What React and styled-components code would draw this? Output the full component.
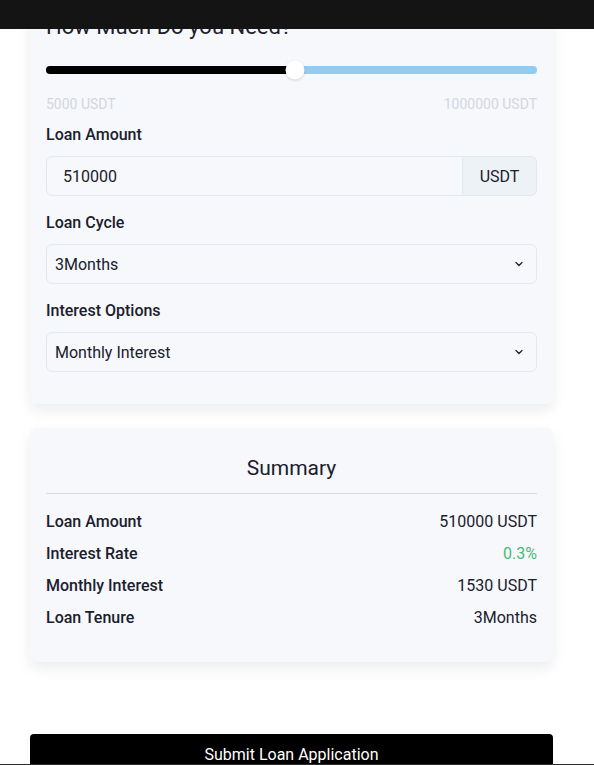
import React from 'react'
import styled, { createGlobalStyle } from 'styled-components'

const GlobalStyle = createGlobalStyle`
  body {
    margin: 0;
    background: #ffffff;
    font-family: Roboto, "Liberation Sans", sans-serif;
    color: #1a202c;
  }
`

const TopBar = styled.header`
  position: fixed;
  top: 0;
  left: 0;
  right: 0;
  height: 29px;
  background: #141414;
  z-index: 10;
`

const BottomEdge = styled.div`
  position: fixed;
  left: 0;
  right: 0;
  bottom: 0;
  height: 1px;
  background: #2d2d2d;
  z-index: 10;
`

const Page = styled.main`
  margin-top: -6px;
  padding: 0 41px 0 30px;
  display: flex;
  flex-direction: column;
`

const Card = styled.section`
  background: #f7f8fc;
  border-radius: 6px;
  box-shadow: 0 6px 14px rgba(0, 0, 0, 0.08);
  padding: ${(p) => p.pad || '16px'};
  margin-bottom: ${(p) => p.gap || '24px'};
`

const Title = styled.h2`
  margin: 3px 0 25px;
  font-size: 22px;
  font-weight: 400;
  line-height: 28px;
  color: #1a202c;
`

const Track = styled.div`
  position: relative;
  height: 8px;
  border-radius: 4px;
  background: #90cdf4;
  margin-bottom: 20px;
`

const Filled = styled.div`
  height: 100%;
  border-radius: 4px 0 0 4px;
  background: #000000;
`

const Thumb = styled.div`
  position: absolute;
  top: 50%;
  width: 19px;
  height: 19px;
  border-radius: 50%;
  background: #ffffff;
  box-shadow: 0 1px 3px rgba(0, 0, 0, 0.15);
  transform: translate(-50%, -50%);
`

const Range = styled.div`
  display: flex;
  justify-content: space-between;
  font-size: 14px;
  line-height: 20px;
  color: #d3d6dc;
  margin-bottom: 11px;
`

const Label = styled.label`
  display: block;
  font-size: 16px;
  font-weight: 500;
  color: #1a202c;
  line-height: 20px;
  margin: 0 0 11px;
`

const Group = styled.div`
  display: flex;
  height: 40px;
  margin-bottom: ${(p) => p.mb || '17px'};
`

const TextInput = styled.input`
  flex: 1;
  min-width: 0;
  box-sizing: border-box;
  border: 1px solid #e2e8f0;
  border-radius: 6px 0 0 6px;
  background: #f7f8fc;
  padding: 0 16px;
  font-family: Roboto, sans-serif;
  font-size: 16px;
  color: #1a202c;
  outline: none;
`

const Addon = styled.div`
  width: 74px;
  box-sizing: border-box;
  display: flex;
  align-items: center;
  justify-content: center;
  background: #edf2f7;
  border: 1px solid #e2e8f0;
  border-left: none;
  border-radius: 0 6px 6px 0;
  font-size: 16px;
  color: #1a202c;
`

const Select = styled.div`
  flex: 1;
  display: flex;
  align-items: center;
  justify-content: space-between;
  box-sizing: border-box;
  border: 1px solid #e2e8f0;
  border-radius: 6px;
  background: #f7f8fc;
  padding: 0 11px 0 8px;
  font-size: 16px;
  color: #1a202c;
`

const SummaryTitle = styled.h3`
  margin: 0;
  padding: 10px 0 11px;
  text-align: center;
  font-size: 21px;
  font-weight: 400;
  line-height: 28px;
  color: #1a202c;
  border-bottom: 1px solid #d9dbe0;
`

const Rows = styled.div`
  display: flex;
  flex-direction: column;
  gap: 12px;
  padding-top: 18px;
`

const Row = styled.div`
  display: flex;
  justify-content: space-between;
  align-items: center;
  font-size: 16px;
  line-height: 20px;
`

const Key = styled.span`
  font-weight: 500;
  color: #1a202c;
`

const Value = styled.span`
  color: ${(p) => (p.accent ? '#48bb78' : '#1a202c')};
`

const SubmitButton = styled.button`
  margin-top: 72px;
  height: 44px;
  border: none;
  border-radius: 4px;
  background: #000000;
  color: #ffffff;
  font-family: Roboto, sans-serif;
  font-size: 16px;
  padding: 0 0 4px;
`

const Chevron = () => (
  <svg width="12" height="12" viewBox="0 0 24 24" fill="none" stroke="#1a202c" strokeWidth="2.5" strokeLinecap="round" strokeLinejoin="round">
    <path d="M6 9l6 6 6-6" />
  </svg>
)

const summary = [
  ['Loan Amount', '510000 USDT'],
  ['Interest Rate', '0.3%', true],
  ['Monthly Interest', '1530 USDT'],
  ['Loan Tenure', '3Months'],
]

const App = () => {
  const pct = ((510000 - 5000) / (1000000 - 5000)) * 100
  return (
    <>
      <GlobalStyle />
      <TopBar />
      <Page>
        <Card gap="24px" pad="16px 16px 32px">
          <Title>How Much Do you Need?</Title>
          <Track>
            <Filled style={{ width: `${pct}%` }} />
            <Thumb style={{ left: `${pct}%` }} />
          </Track>
          <Range>
            <span>5000 USDT</span>
            <span>1000000 USDT</span>
          </Range>
          <Label>Loan Amount</Label>
          <Group>
            <TextInput defaultValue="510000" />
            <Addon>USDT</Addon>
          </Group>
          <Label>Loan Cycle</Label>
          <Group>
            <Select>
              <span>3Months</span>
              <Chevron />
            </Select>
          </Group>
          <Label>Interest Options</Label>
          <Group mb="0">
            <Select>
              <span>Monthly Interest</span>
              <Chevron />
            </Select>
          </Group>
        </Card>
        <Card gap="0" pad="16px 16px 34px">
          <SummaryTitle>Summary</SummaryTitle>
          <Rows>
            {summary.map(([k, v, accent]) => (
              <Row key={k}>
                <Key>{k}</Key>
                <Value accent={accent}>{v}</Value>
              </Row>
            ))}
          </Rows>
        </Card>
        <SubmitButton>Submit Loan Application</SubmitButton>
      </Page>
      <BottomEdge />
    </>
  )
}

export default App
